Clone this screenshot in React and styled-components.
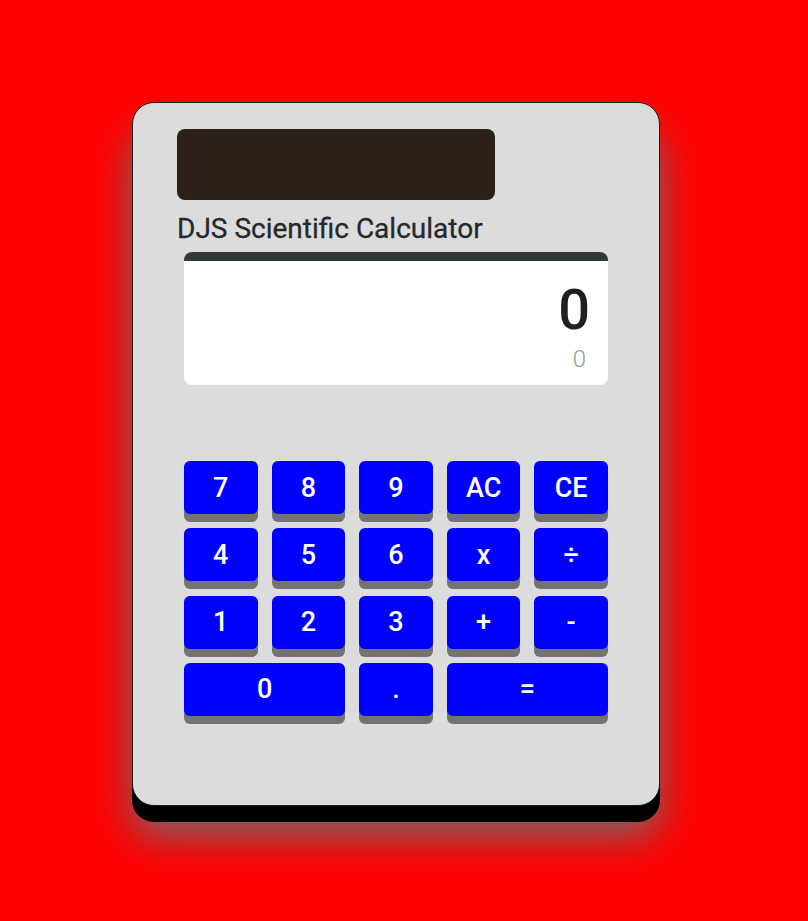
import React from "react";
import styled, { createGlobalStyle } from "styled-components";

const Global = createGlobalStyle`
  html, body { margin: 0; padding: 0; background: #ff0000; }
  body { font-family: Roboto, "Liberation Sans", sans-serif; }
`;

const Page = styled.div`
  display: flex;
  justify-content: center;
  padding: 102px 16px 0 0;
  min-height: 921px;
  box-sizing: border-box;
`;

const Card = styled.div`
  width: 528px;
  height: 704px;
  box-sizing: border-box;
  background: #dcdcdc;
  border: 1px solid #1e1e1e;
  border-radius: 22px;
  box-shadow: 0 16px 0 0 #000, 0 30px 40px 0 rgba(110, 110, 110, 0.95);
  padding: 26px 51px 0 51px;
  display: flex;
  flex-direction: column;
`;

const Solar = styled.div`
  width: 318px;
  height: 71px;
  margin-left: -7px;
  background: #2c2018;
  border-radius: 8px;
`;

const Title = styled.h1`
  margin: 15px 0 0 -7px;
  font-size: 28px;
  line-height: 1;
  font-weight: 400;
  color: #26292b;
  -webkit-text-stroke: 0.3px #26292b;
`;

const Screen = styled.div`
  margin-top: 9px;
  height: 133px;
  box-sizing: border-box;
  background: #fff;
  border-top: 9px solid #2f3c35;
  border-radius: 8px;
  padding: 21px 18px 0 0;
  display: flex;
  flex-direction: column;
  align-items: flex-end;
`;

const Result = styled.div`
  font-size: 56px;
  line-height: 1;
  font-weight: 500;
  color: #1f1f1f;
`;

const Formula = styled.div`
  margin-top: 9px;
  margin-right: 4px;
  font-size: 24px;
  line-height: 1;
  font-weight: 300;
  color: #9a9a9a;
`;

const Keypad = styled.div`
  margin-top: 76px;
  display: grid;
  grid-template-columns: repeat(5, 1fr);
  column-gap: 14px;
  row-gap: 14.3px;
`;

const Key = styled.button`
  grid-column: span ${(p) => (p.$span || 1)};
  height: 53px;
  border: none;
  border-radius: 6px;
  background: #0000ff;
  color: #fff;
  font-family: Roboto, "Liberation Sans", sans-serif;
  font-size: 27px;
  font-weight: 500;
  padding: 0;
  box-shadow: 0 8px 0 0 #737373;
  cursor: pointer;
`;

const keys = [
  ["7"], ["8"], ["9"], ["AC"], ["CE"],
  ["4"], ["5"], ["6"], ["x"], ["÷"],
  ["1"], ["2"], ["3"], ["+"], ["-"],
  ["0", 2], ["."], ["=", 2],
];

export default function App() {
  return (
    <>
      <Global />
      <Page>
        <Card>
          <Solar />
          <Title>DJS Scientific Calculator</Title>
          <Screen>
            <Result>0</Result>
            <Formula>0</Formula>
          </Screen>
          <Keypad>
            {keys.map(([label, span]) => (
              <Key key={label} $span={span}>
                {label}
              </Key>
            ))}
          </Keypad>
        </Card>
      </Page>
    </>
  );
}
